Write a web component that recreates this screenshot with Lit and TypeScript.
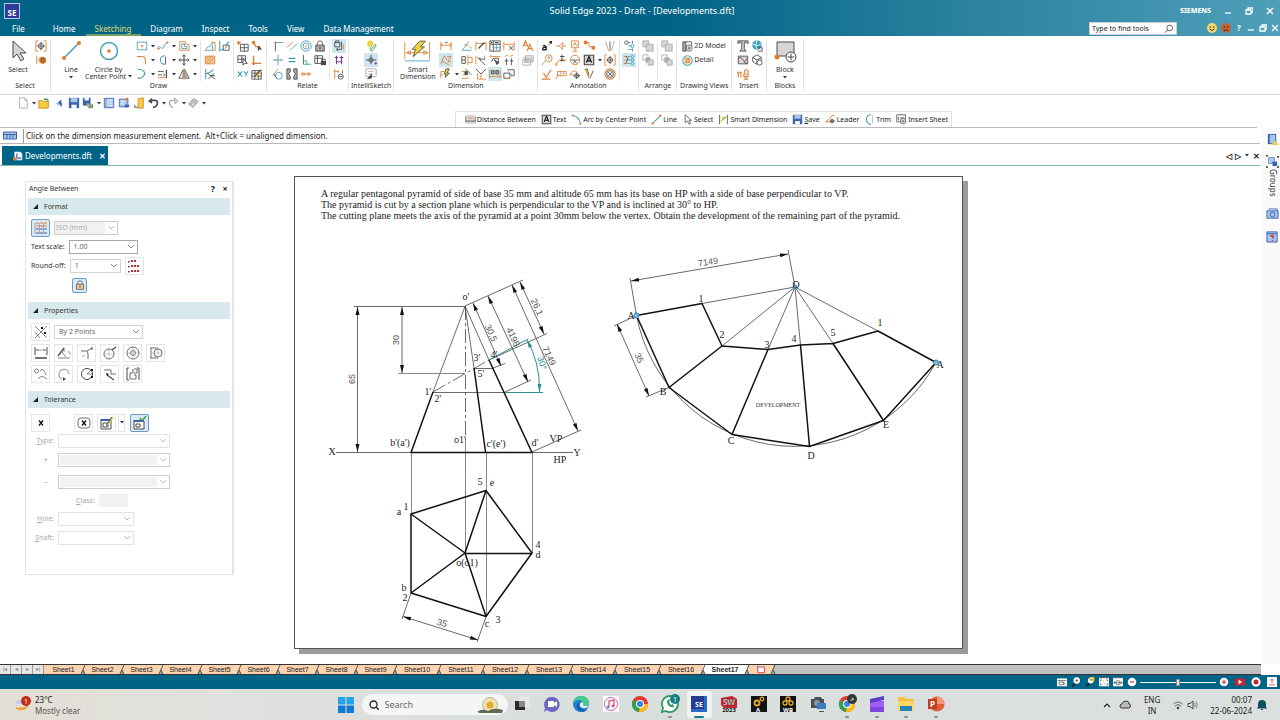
import { LitElement, html, svg, css, nothing } from "lit";
import { customElement, property, state } from "lit/decorators.js";
import { classMap } from "lit/directives/class-map.js";

/* ---------- icon drawing ---------- */

const COLORS: Record<string, string> = {
  o: "#dd7f33", t: "#3f9db6", k: "#4a4a4a", g: "#a9a9a9", l: "#d6d6d6", y: "#f4cf3f",
  b: "#3f62b0", c: "#a8c6ea", p: "#74318f", w: "#ffffff", r: "#c8262c", n: "#3c9a4c", s: "#f4c999", x: "#111111",
};

const c = (x: number, y: number, r: number) => `M${x - r} ${y}a${r} ${r} 0 1 0 ${2 * r} 0a${r} ${r} 0 1 0 ${-2 * r} 0`;

/* Each layer: colour letter, "*" for a fill, optional stroke width, then path data. */
const ICONS: Record<string, string[]> = {
  "Select tool": ["l* M7 2v17l4-4 4 7 3-2-4-6h6z", "k M7 2v17l4-4 4 7 3-2-4-6h6z"],
  "Selection filter": ["o M4 1H1v12h3M10 1h3v12h-3", `k ${c(7, 7, 3)}`, "k M7 2v10M2 7h10"],
  "Select options": ["o M2 2v10M2 7h3", "o* M5 4l4-1 4 2v5l-4 2-4-2z", `k ${c(9, 7, 2)}`],
  "Line tool": ["t1.4 M5 19L20 4", `o* ${c(5, 19, 2)}`, `o* ${c(20, 4, 2)}`],
  "Circle tool": [`t1.4 ${c(12, 12, 8.5)}`, `o* ${c(12, 12, 1.8)}`],
  "Rectangle by center": ["t M1.5 2.5h11v9h-11z", `o* ${c(7, 7, 1.3)}`],
  "Curve": ["t M1 11C2 2 6 14 8 8S11 4 13 3", `o* ${c(2, 10, 1.3)}`, `o* ${c(12, 3, 1.3)}`],
  "Offset": ["o M2 2h7v3h4v7H2z", "t M4.500 4.500h3v3h3v2.500h-6z"],
  "Fillet": ["o1.200 M1 3h5q5 0 5 5v4", "l M11 1v3M8 3h3"],
  "Trim": ["t1.200 M9 12A5 5 0 1 1 9 2", "k M10 3v9", "o M7 12h3"],
  "Move": ["k1.3 M7 1v12M1 7h12", "k M5 3l2-2 2 2M5 11l2 2 2-2M3 5L1 7l2 2M11 5l2 2-2 2"],
  "Arc": ["t1.3 M2 2c6-1 10 3 7 7s-5 3-6 3", `o* ${c(3, 12, 1.2)}`],
  "Extend": ["k M1 4h7M1 8h5", "k M7 6l2 2-2 2", "k1.5 M11 2v10", "o M1 11h9"],
  "Mirror": ["k M6 2v10H1zM8 2v10h5z", "g* M8 2v10h5z", "o M7 0v14"],
  "Freeform": ["t M1 12h9V6M3 9q5-1 7-6", "o M1 12l3-3M10 3h3v9h-3", `o* ${c(10, 3, 1.2)}`],
  "Convert curve": ["t1.200 M2 1v12M2 12C8 12 9 4 13 2", "w* M6 6h7v6H6z", "k M6 6h7v6H6z", "k M8 10l3-3"],
  "Fill": ["s* M1.500 2.500h11v9h-11z", "o M1.500 2.500h11v9h-11zM2 6l4-4M2 10l8-8M5 11l7-7"],
  "Clean sketch": ["t1.200 M2 1v12M2 7q5-1 9-5", "k M4 6l9 7M12 6l-7 7M7 9h6"],
  "Grid origin": ["k M4 5h9v8H4zM8.500 5v8M4 9h9", "o* M0 1l5 2-4 3z"],
  "Key-in point": ["o1.600 M3 3l3 5h5", `o* ${c(3, 3, 2)}`, "k* M8 6v7l2-2 3 0z"],
  "Grid snap": ["k M1 2h9v8H1zM5.500 2v8M1 6h9", "w* M7 5v8l2-2h3z", "k M7 5v8l2-2h3z"],
  "Reposition origin": ["o1.600 M3 2v9h9", `o* ${c(3, 11, 1.800)}`],
  "XY": ["t1.300 M1 4l5 6M6 4l-5 6M8 4l2.500 3L13 4M10.500 7v3"],
  "Grid options": ["k M1 3h11v10H1zM1 6h11M1 9.500h11M4.500 3v10M8.500 3v10", "k1.500 M5 9l7-7", "y1.200 M6 10l7-7"],
  "Connect": ["k M4 13V3", "t M4 3h9", `o* ${c(4, 3, 1.200)}`],
  "Parallel": ["o M1 9L8 2", "t M5 12l8-8"],
  "Concentric": [`t ${c(7, 7, 6)}`, `t ${c(7, 7, 3.500)}`, `o* ${c(7, 7, 1)}`],
  "Lock": ["g* M2 6h10v7H2z", "k M2 6h10v7H2zM4 6V4q0-3 3-3t3 3v2", "k M7 8v3"],
  "Horizontal": ["t M7 1v12M1 7h12", "o M3 7h2M9 7h2"],
  "Equal": ["t1.400 M3 5h8M3 9h8"],
  "Perpendicular": ["k M4 1v11", "t M4 12h9M4 8h4v4"],
  "Rigid set": ["k M1 2h9v9H1zM1 5h9M4 2v9", "k* M8 8h6v5H8z", "k M9 8V6h4v2"],
  "Tangent": [`t ${c(8, 9, 4)}`, "o M1 9l6-8", "k M2 7l3 4"],
  "Symmetric": ["g* M1 1h4v3L3 7l2 3v3H1zM13 1H9v3l2 3-2 3v3h4z", "k M1 1h4v3L3 7l2 3v3H1zM13 1H9v3l2 3-2 3v3h4z"],
  "Collinear": ["o M1 7h12", `o ${c(4, 7, 1.500)}`, `o ${c(10, 7, 1.500)}`],
  "Maintain relations": ["k M2 3h6v5H2zM3 3V1h4v2M10 2v9H4M6 9l-2 2 2 2", "o M12 5v6"],
  "Relation handles": ["p1.200 M4 2v10M10 2v10M2 4h4M8 4h4M4 9h6"],
  "Relation assistant": ["o M2 1v12M1 4h6M6 3v3", `k ${c(9, 10, 3)}`, "k M7 10h4M11 3v3"],
  "Intellisketch ideas": [`y* ${c(6, 4, 3.500)}`, "g M5 8h3M5 9.500h3", "n M6 12l6-7 1 2-5 6z"],
  "Alignment indicator": ["k M7 1v11M1 7h12M4.500 7a2.500 2.500 0 1 0 5 0a2.500 2.500 0 1 0-5 0", "p M11 11h3M12.500 9.500v3"],
  "Intellisketch options": ["g M1 1h12v9H1z", "g M4 4h6M4 7h6", "k* M2 13l6-7v6z"],
  "Smart tool": ["o M1 3v21M31 3v21M3 16h26M3 16l5-2.500v5zM29 16l-5-2.500v5z", "y* M19 2h7l-6 7h5L11 21l3-9h-4z", "k M19 2h7l-6 7h5L11 21l3-9h-4z", "t M1 26h31"],
  "Distance": ["o M1 2v10M13 2v10M1 6h12M3 4L1 6l2 2M11 4l2 2-2 2", "k M6 3h3"],
  "Angle between": ["o M1 12L5 2l3 5M2 8l9 5M8 3h5L9 9h4"],
  "Feature dimension": ["y* M7 1h4L8 6h3l-5 5 1-4H5z", "k M7 1h4L8 6h3l-5 5 1-4H5z", "o M1 12V4h4M1 8h3"],
  "Chamfer": ["t M2 11L9 2M1 12h11", "o M4 5l5 2M10 8l3 2"],
  "Attach": ["o M1 2v10M13 2v10M1 4h12", "k1.500 M4 10l7-7"],
  "Dimension styles": ["k M1 1h12v12H1zM1 5h12M5 1v12", "t M6 9h6M9 6v6", "k1.300 M2 3h2M7 3h4"],
  "Dimension axis": ["o M1 2v10M13 2v10M1 5h12", "k M7 7l5 5M12 7l-5 5"],
  "Symmetric diameter": ["k M1 3h4v8H1zM1 7h4", "o M8 1v12M8 4h5v6H8"],
  "Ordinate": ["o M1 2v10M11 2v4", "k M5 6h7M5 6l7 7M3 4l4 2"],
  "Edit text": ["k M3 9l2-4 3 4M6 5h5v6", "o M1 3h12M1 3l2-2", "k* M6 6l6 4-3 3z"],
  "Line up": ["o M2 3l4-2M8 3l4-2", "k M4 5v8M10 5v8M2 8h4M8 8h4"],
  "Remove dimension": ["o M1 4h8M2 8h6M1 12h8", "k M5 1l7 7", "k* M4 4h4v4H4z"],
  "Coordinate": ["k M1 1l6 6 6-6", "o M3 6v7h10M7 7v6"],
  "Auto-dimension": ["o M1 2v10M13 2v10M1 10h12", "g* M3 3h3v4H3zM8 3h3v4H8z", "k M3 3h3v4H3zM8 3h3v4H8z"],
  "Copy dimension": ["k M1 6h7v6H1zM5 2h8v7H9", "t M6 4l5 5", "o M2 12h5"],
  "Style": ["o1.300 M1 8l3-7 3 7M2 6h4M6 13l3-8 4 8M7 10h5"],
  "Prefix": ["l* M2 3h11v7H2z", "g M1 6h9v7H1zM4 6V2h9v7h-3", "g M3 8h5M3 10h5"],
  "Callout": ["x1.500 M2 7q3-1 4 1v4M6 9q-4-1-4 1.500T6 11", "o M8 7l5-5", "x* M13 1l-4 1 3 3z"],
  "Flag": ["o M1 7h4l4-4v8L5 7M9 7h4"],
  "Datum target": ["o M3 1h8v8H3zM7 9v4M4 13h6", "o M5 7l2-4 2 4"],
  "Leader": ["o M3 3h4v5h5", "o* M1 1h4v4H1zM10 7h4v4h-4z"],
  "Weld symbol": ["g M2 1l3 11M12 1L9 12", "k M7 2v9", "o M5 12h4"],
  "Balloon": [`o ${c(9, 5, 4)}`, "o M5 8l-4 5", "k M8 4q1-2 2 0l-1 2"],
  "Surface mark": ["o M1 13l4-6h8M3 13H1v-3", "k1.200 M8 1v7M6 3h5M6 8h5"],
  "Datum": [`o ${c(7, 7, 5.500)}`, "k M2 7h10M5 11l2-3 2 3"],
  "Text box": ["l* M1.500 1.500h11v11h-11z", "k1.300 M1.500 1.500h11v11h-11z", "x1.400 M4 10l3-7 3 7M5 8h4"],
  "Center mark": ["o M3 1H1v12h2M11 1h2v12h-2", `k ${c(7, 7, 3)}`, "k M7 2v10M3 7h8"],
  "Surface texture": ["o1.300 M3 6l3 5 6-9M1 13h10"],
  "Feature frame": ["o M1 13l3-6M3 4h10v5H3zM7 4v5", "k M9 6h2"],
  "Edge condition": ["o M1 8q3-6 8-4M1 8h4", `k ${c(9, 9, 2.500)}`, "k M9 5v8M5 9h8"],
  "Leader mark": ["o1.200 M1 10l5-4 3-4h3M1 10h9", `k ${c(9, 9, 2)}`, "k M9 6v6M6 9h7"],
  "Hatch": ["y* M2 2l3-1 2 11z", "k M2 2l3-1 2 8M8 12l4-9", "o M7 12L4 4"],
  "Bolt circle": [`o1.300 ${c(7, 7, 6)}`, `k ${c(7, 7, 4)}`, "k M4 4l6 6M10 4l-6 6"],
  "Track changes": ["t M6 3h3M6 7h4M6 11h4", `k ${c(4, 3, 2)}`, `t ${c(11, 7, 1.800)}`, "k M11 1v3M11 10v3"],
  "Show changes": ["o M1 3h5M1 7h5M1 11h5", `t ${c(11, 3, 1.500)}`, `t ${c(11, 7, 1.500)}`, `t ${c(11, 11, 1.500)}`, "t M6 3h3M6 7h3M6 11h3", "k M3 2l3 4-3 5"],
  "Bring to front": ["l* M1 1h7v7H1z", "g M1 1h7v7H1z", "l* M5 5h8v8H5z", "g M5 5h8v8H5z"],
  "Send to back": ["g M1 1h6v6H1z", "g* M4 4h6v6H4z", "l* M7 7h6v6H7z", "g M7 7h6v6H7z"],
  "2D model view": ["g* M1 1h4v12H1z", "k M1 1h11v5M1 1v12h4M5 1v12", `k ${c(9, 9, 4)}`, "k M9 6.500v5M6.500 9h5"],
  "Detail view": [`t1.300 ${c(7, 7, 6)}`, "s* M4 4h6v6H4z", "o M4 4h6v6H4zM6 4v6M8 4v6"],
  "Text": ["l* M1 1h12v3H8.500v8h2v1h-7v-1h2V4H1z", "k M1 1h12v3h-1L11 2.500H8.500v9l2 .5v1h-7v-1l2-.5v-9H3L2 4H1z"],
  "Hyperlink": [`t* ${c(7, 6, 5.500)}`, "w M2 5q5 3 10 0M7 1q-3 5 0 10", "k M8 9h5v4H8"],
  "Image": ["l* M1.500 2.500h11v9h-11z", "k M1.500 2.500h11v9h-11zM2 4q4 0 6 4t4 3", "r M9 9l3-4"],
  "Object": ["k M2 4l5-3 5 3v5l-5 3-5-3zM2 4l5 3 5-3M7 7v5", "w* M7 7h6v6H7z", `k ${c(10, 10, 3)}`],
  "Symbol": ["o1.300 M0 5h6M1.500 5v6M4.500 5v6M9 6V4q0-2 2-2t2 2v2M8 7h5v3H8zM10.500 10v3M8 13h5"],
  "Block tool": ["l* M4 3h17v14H4z", "k M4 3h17v14H4z", `o* ${c(4, 18, 2.500)}`, `w* ${c(18, 18, 5)}`, `k ${c(18, 18, 5)}`, "k M18 14.500v7M14.500 18h7"],
  "New": ["w* M3 1h6l3 3v9H3z", "g M3 1h6l3 3v9H3zM9 1v3h3"],
  "Open": ["y* M1 4h4l1 1h6v8H1z", "o M1 4h4l1 1h6v8H1z", "n1.500 M7 3q4-2 5 2"],
  "Previous window": ["c* M10 3v9L3 8z", "b* M9 3l2 8-5-4z"],
  "Save": ["b* M1 1h12v12H1z", "c* M3 1h8v5H3z", "w* M4 9h6v4H4z"],
  "Save as": ["b* M1 1h9v9H1z", "w* M3 1h5v3H3z", "g* M5 7l8 2v4H7z", "n M7 7l5 5M12 8v4H8"],
  "Properties": ["c* M1.500 1.500h11v11h-11z", "b M1.500 1.500h11v11h-11z", "w M5 4h6M5 7h6M5 10h6", "b M3 4h1M3 7h1M3 10h1"],
  "Sheet setup": ["c* M1.500 2.500h10v9h-10z", "b M1.500 2.500h10v9h-10z", "w M3 5h5M3 8h4", "o* M9 1h3v3H9z", "b* M8 9h5v3H8z"],
  "Close": ["y* M6 2l6-1v12H6z", "o M6 2l6-1v12H6z", "k M2 12h4M2 9v3"],
  "Undo": ["k2 M4 4h5q4 0 3 4t-5 4", "k* M1 5l5-4v7z"],
  "Redo": ["g1.500 M10 4H6Q2 4 3 8t4 4", "l* M13 5L9 1v7z", "g M13 5L9 1v7z"],
  "Update": ["l* M2 8l6-6 5 3-6 7z", "g1.200 M2 8l6-6 5 3-6 7zM5 4l6 4M3 10l7-6"],
  "Distance between": ["l* M2 1h10v12H2z", "k M1 3v8M13 3v8M1 9h12", "o M4 5h6"],
  "Arc tool": ["t1.300 M2 2q9 1 10 11", `o* ${c(2, 2, 1.300)}`, `o* ${c(12, 12, 1.300)}`],
  "Small line": ["t1.300 M2 12L12 2", `o* ${c(2, 12, 1.500)}`, `o* ${c(12, 2, 1.500)}`],
  "Small select": ["w* M4 1v10l3-2 2 4 2-1-2-4h3z", "k M4 1v10l3-2 2 4 2-1-2-4h3z"],
  "Small smart": ["k M2 1v12M12 1v12", "y1.500 M3 10L11 3M4 5l5-1", "n M5 8l5-4"],
  "Trim tool": ["t1.300 M9 13A6 6 0 1 1 9 1", "g M11 2v10"],
  "Insert sheet": ["k M1 1h11v9H1zM3 4v4M5 5h5", `w* ${c(9, 9, 3.500)}`, `k ${c(9, 9, 3.500)}`, "k M9 7v4M7 9h4"],
  "Prompt": ["c* M0 3h14v7H0z", "b M0.500 3h13v7H.5zM1 5.500h12M4 5.500v4M7 5.500v4M10 5.500v4"],
  "Draft file": ["w* M2 1h8l3 3v9H2z", "c* M4 3h3v5h5v4H4z", "b M5 4v6h6", "o* M0 9h5v4H0z"],
  "Style table": ["o M2 2h3M6 2h3M10 2h3M2 5h3M6 5h3M10 5h3", "b M2 8h3M6 8h3M10 8h3M2 12h3M6 12h3M10 12h3", "g M1 2v11M5.500 2v11M9.500 2v11"],
  "Decimals": ["r M4 1l2 2M6 1L4 3M7 1l2 2M9 1L7 3M4 6l2 2M6 6L4 8M7 6l2 2M9 6L7 8M10 6l2 2M12 6l-2 2M4 11l2 2M6 11l-2 2M7 11l2 2M9 11l-2 2M10 11l2 2M12 11l-2 2", "k* M1 2h1.500v1.500H1zM1 7h1.500v1.500H1zM1 12h1.500v1.500H1z"],
  "Padlock": ["s* M2 6h10v7H2z", "k M2 6h10v7H2zM4 6V4q0-3 3-3t3 3v2", "k1.500 M7 8v3"],
  "Intersection": ["k.7 M1 1l12 12M13 1L1 13M1 7l5 6", "x* M7 2h2v2H7zM10 7h2v2h-2z"],
  "Length": ["k M1 1v8M13 1v8M2 4h3M9 4h3", "g M5 4h4", "k1.500 M1 12h12"],
  "Angle": ["k1.300 M1 10L7 2", "k.7 M7 2v4M4 5l5 6M1 12h12", "g M10 6h3v3"],
  "Radius point": ["k.8 M1 5h5q2 0 2 3v5M7 5l5-3", "g M2 10h3", "k M12 1v3"],
  "Diameter": [`k.8 ${c(6, 8, 5)}`, "g.6 M6 2v12M0 8h12", "k1.500 M9 4l4-3"],
  "Concentric rings": [`k.8 ${c(7, 7, 6)}`, `k.8 ${c(7, 7, 2.500)}`, "g.6 M7 0v14M0 7h14"],
  "Linear diameter": ["k.8 M2 2v10M1 2h8M1 12h8", `k.8 ${c(9, 7, 4)}`, "g.6 M3 7h11M9 1v12"],
  "Tangent arcs": [`k.7 ${c(2.500, 4, 2)}`, "k.7 M6 4l2-2q3 2 4 6M4 12q3-5 9 0"],
  "Arc length": ["g1.200 M5 12A5 5 0 1 1 12 7", "k* M6 10v4l3-2z"],
  "Arc angle": [`k ${c(7, 7, 5.500)}`, "k.7 M7 7h5M7 7l4-4", "x* M11 2h2v2h-2zM11 9h2v2h-2z"],
  "Jogged": ["k.8 M1 3h7v4h5", "k1.200 M4 8l7 5", "x* M3 6l3 1-2 2z"],
  "Bracketed": ["k M3 1H1v12h2M11 1h2v12", "k.8 M7 2v4H4v6h6V8H8M8 2h3v4H8"],
  "Clear tolerance": ["x1.300 M5 4.500l4 5M9 4.500l-4 5"],
  "Round tolerance": ["k.8 M4 2h6q3 0 3 3v4q0 3-3 3H4q-3 0-3-3V5q0-3 3-3z", "x1.300 M5 4.500l4 5M9 4.500l-4 5"],
  "Edit style": ["w* M1 4h10v9H1z", "b2 M1 4h10", "k M1 3v10h10V4M3 7h5v4H3z", "y1.500 M7 9l6-8", "k M6 10l6-9"],
  "Apply style": ["w* M1 4h10v9H1z", "b2 M1 5h10", "k M1 4v9h10V5M3 8h4v3H3z", "n1.500 M7 2l2 3 4-5"],
  "Library": ["b* M2 1h9v11H2z", "c* M4 2h6v9H4z", "y* M9 8l5 5H6z"],
  "Groups": ["b M3 3h6v6H3z", "c* M4 4h5v5H4z", "b* M7 7h5v5H7z", "k* M0 0h2v2H0zM12 1h2v2h-2zM0 12h2v2H0zM12 12h2v2h-2z"],
  "Camera": ["c* M1 3h12v8H1z", "b M1 3h12v8H1zM3 1h9v2", `b ${c(7, 7, 2.500)}`],
  "Help page": ["c* M1 2h11v11H1z", "b M1 2h11v11H1zM1 4h11", "r1.500 M5 7q2-3 3 0L7 9M7 11v1"],
  "Fit sheet": ["w* M0 2h14v11H0z", "k M1 5h12M3 7h6v4H3zM9 7l3 4"],
  "Zoom": ["x2 M2 13l4-4", `w* ${c(8, 5, 4.500)}`, "k M8 3v4M6 5h4"],
  "Zoom area": ["x2 M2 13l4-4", `w* ${c(8, 5, 4)}`, "y* M7 0h6v6H9z", "k M6 4h4"],
  "Fit": ["w* M0 1h14v12H0z", "k M0 1h14M2 6V4h2M10 4h2v2M2 9v2h2M10 11h2V9M6 5v1M8 9v1"],
  "Fit width": ["w* M0 1h14v12H0z", "k M0 1h14M1 8h12M3 6L1 8l2 2M11 6l2 2-2 2", `k ${c(7, 8, 3)}`],
  "YouTube": ["r* M0 2h14v10H0z", "w* M5 4l5 3-5 3z"],
  "Record": [`w* ${c(7, 7, 6.500)}`, `r* ${c(7, 7, 3.500)}`],
  "Upload": ["w* M0 0h14v14H0z", "r M3 11h8M7 9V3M5 5l2-2 2 2"],
  "Zoom out": [`w* ${c(7, 7, 6)}`, "r1.500 M4 7h6"],
  "Zoom in": [`w* ${c(7, 7, 6)}`, "r1.500 M4 7h6M7 4v6"],
  "Search glass": [`k1.200 ${c(8, 5.500, 4)}`, "k1.400 M5 8.500L1.500 12"],
  "New sheet": ["w* M3 2h10v10H3z", "r1.300 M3 5v7h10V3H5", "b M1 3h5M3 1v5"],
};

const ic = (name: string, w = 14, h = w, vw = w, vh = h) => html`<svg class="ic" width=${w} height=${h} viewBox="0 0 ${vw} ${vh}" aria-hidden="true">
  ${(ICONS[name] ?? []).map((layer) => {
    const m = /^(\w)(\*?)([\d.]*) (.*)$/.exec(layer)!;
    const col = COLORS[m[1]];
    return svg`<path d=${m[4]} fill=${m[2] ? col : "none"} stroke=${m[2] ? "none" : col} stroke-width=${m[3] || "1"}></path>`;
  })}
</svg>`;

const chevron = html`<svg class="chev" width="8" height="6" viewBox="0 0 8 6" aria-hidden="true"><path d="M1 1l3 3 3-3" fill="none" stroke="currentColor" stroke-width=".8"></path></svg>`;
const caret = html`<svg class="caret" width="4" height="3" viewBox="0 0 4 3" aria-hidden="true"><path d="M0 0h4L2 2.500z" fill="#333"></path></svg>`;

const base = css`
  :host { display: block; font-family: "Noto Sans", "Open Sans", sans-serif; font-size: 7px; line-height: 10px; color: #333; }
  * { box-sizing: border-box; }
  button, input, select { font: inherit; color: inherit; margin: 0; padding: 0; border: 0; background: none; border-radius: 0; }
  button { display: flex; align-items: center; justify-content: center; white-space: nowrap; }
  a { color: inherit; text-decoration: none; }
  svg { display: block; flex: none; }
  .spacer { flex: 1; }
`;

/* ---------- title and menu ---------- */

@customElement("se-header")
class SeHeader extends LitElement {
  static styles = [base, css`
    :host { background: linear-gradient(90deg, #006487 0 52%, #2c829f 76%, #4f9fba); color: #fff; font-size: 8px; }
    .title { display: grid; grid-template-columns: 1fr auto 1fr; align-items: center; height: 22px; padding-left: 4px; }
    .logo { width: 16px; height: 16px; border: 1px solid #b9c6ea; background: #2b3e9c; font-weight: 700; line-height: 17px; text-align: center; }
    h1 { margin: 0; font-size: 9px; font-weight: 400; }
    .win { display: flex; align-items: center; justify-content: flex-end; gap: 13px; padding-right: 6px; }
    .win button { width: 8px; height: 14px; }
    .brand { font-weight: 800; font-size: 7px; }
    .menu { display: flex; height: 14px; align-items: stretch; padding-left: 3px; }
    .menu a { display: flex; align-items: center; padding: 0 10px 0 9px; line-height: 12px; }
    .menu a:first-child { margin-right: 9px; }
    .menu a.on { color: #e2d56c; background: linear-gradient(#0000 12px, #7a9f66 12px); }
    .find { display: flex; align-items: center; width: 88px; background: #fff; margin-bottom: 1px; padding: 0 2px; border: 1px solid #ccd; }
    .find input { flex: 1; min-width: 0; font-size: 7px; outline: 0; color: #222; }
    .find input::placeholder { color: #222; opacity: 1; }
    .side { display: flex; align-items: center; gap: 4px; padding: 0 1px 2px 30px; }
    .side button { width: 10px; height: 12px; font-weight: 700; }
    .side button:nth-child(n + 3) { width: 8px; }
  `];
  private face(fill: string, mouth: string) {
    return html`<svg width="10" height="10" viewBox="0 0 10 10" aria-hidden="true"><circle cx="5" cy="5" r="5" fill=${fill}></circle><circle cx="3.300" cy="4" r=".8" fill="#333"></circle><circle cx="6.700" cy="4" r=".8" fill="#333"></circle><path d=${mouth} fill="none" stroke="#333"></path></svg>`;
  }
  private win(kind: string) {
    const d = { min: "M1 6h6", restore: "M1 3h5v4H1zM3 3V1h5v4H6", close: "M1 1l6 6M7 1L1 7" }[kind];
    return html`<button aria-label=${kind}><svg width="8" height="8" viewBox="0 0 8 8" aria-hidden="true"><path d=${d} fill="none" stroke="#fff" stroke-width="1.300"></path></svg></button>`;
  }
  render() {
    const menu = ["File", "Home", "Sketching", "Diagram", "Inspect", "Tools", "View", "Data Management"];
    return html`
      <div class="title">
        <div class="logo">SE</div>
        <h1>Solid Edge 2023 - Draft - [Developments.dft]</h1>
        <div class="win"><span class="brand">SIEMENS</span>${this.win("min")}${this.win("restore")}${this.win("close")}</div>
      </div>
      <nav class="menu">
        ${menu.map((m) => html`<a href="#" class=${classMap({ on: m === "Sketching" })}>${m}</a>`)}
        <span class="spacer"></span>
        <label class="find"><input type="search" placeholder="Type to find tools" aria-label="Type to find tools" />${ic("Search glass", 10, 10, 14, 14)}</label>
        <div class="side">
          <button aria-label="Like">${this.face("#f5dc6a", "M2.500 6q2.500 3 5 0")}</button>
          <button aria-label="Dislike">${this.face("#c9622f", "M2.500 8q2.500-3 5 0")}</button>
          <button>?</button>${this.win("min")}${this.win("restore")}${this.win("close")}
        </div>
      </nav>`;
  }
}

/* ---------- ribbon ---------- */

@customElement("se-ribbon")
class SeRibbon extends LitElement {
  static styles = [base, css`
    :host { background: #fff; border-bottom: 1px solid #d9d9d9; }
    .bar { display: flex; padding: 3px 0; }
    .group { display: flex; flex-direction: column; border-right: 1px solid #e2e2e2; }
    .row { display: flex; height: 42px; flex: none; }
    .label { text-align: center; white-space: nowrap; height: 10px; padding: 0 2px; }
    .cluster { display: flex; padding: 0 2px; border-left: 1px solid #e6e6e6; flex: 1; justify-content: center; }
    .cluster:first-child { border-left: 0; }
    .cluster.pad { padding-left: 4px; }
    .col { display: grid; grid-template-rows: repeat(3, 14px); width: 14px; }
    .col.wide { width: 21px; }
    .big + .col.first { margin-left: 5px; }
    .cell { display: grid; grid-template-columns: 14px 7px; align-items: center; justify-items: center; height: 14px; }
    .cell button { width: 14px; height: 14px; }
    .cell button.on { background: #cfe6ee; }
    .cell .ic { width: 12px; height: 12px; }
    .big { flex-direction: column; justify-content: flex-start; line-height: 7px; gap: 3px; height: 42px; text-align: center; width: 43px; }
    .big.narrow { width: 32px; }
    .big .ic { flex: none; }
    .big .txt { display: flex; flex-direction: column; align-items: center; }
    .big .txt .caret { margin-top: 3px; }
    .big .in { display: flex; align-items: center; gap: 2px; }
    .big .in .caret { margin: 0; }
    .views { display: flex; flex-direction: column; align-items: flex-start; padding: 0 5px; }
    .views button { height: 14px; gap: 1px; }
    .views .ic { width: 11px; height: 11px; }
  `];
  private col(spec: string, wide = false, first = false) {
    return html`<div class="col ${wide ? "wide" : ""} ${first ? "first" : ""}">${spec.split("|").map((raw) => {
      const name = raw.replace(/[+!]/g, "");
      return html`<div class="cell">${name ? html`<button class=${raw.includes("!") ? "on" : ""} aria-label=${name} title=${name}>${ic(name, 14)}</button>` : html`<span></span>`}${raw.includes("+") ? caret : nothing}</div>`;
    })}</div>`;
  }
  private big(icon: string, lines: string[], opt: { narrow?: boolean; below?: boolean; inline?: boolean; w?: number } = {}) {
    return html`<button class="big ${opt.narrow ? "narrow" : ""}">
      ${opt.w ? ic(icon, opt.w, 24, 34, 28) : ic(icon, 24)}
      <span class="txt">${lines.map((l, i) => html`<span class="in">${l}${opt.inline && i === lines.length - 1 ? caret : nothing}</span>`)}${opt.below ? caret : nothing}</span>
    </button>`;
  }
  private group(label: string, clusters: unknown[]) {
    return html`<section class="group"><div class="row">${clusters}</div><div class="label">${label}</div></section>`;
  }
  render() {
    const cl = (...x: unknown[]) => html`<div class="cluster">${x}</div>`;
    const cp = (...x: unknown[]) => html`<div class="cluster pad">${x}</div>`;
    return html`<div class="bar">
      ${this.group("Select", [cl(this.big("Select tool", ["Select"], { narrow: true }), this.col("Selection filter|Select options"))])}
      ${this.group("Draw", [
        cp(this.big("Line tool", ["Line"], { narrow: true, below: true }), this.big("Circle tool", ["Circle by", "Center Point"], { inline: true }),
          this.col("Rectangle by center+|Fillet+|Arc+", true, true), this.col("Curve+|Trim+|Extend+", true), this.col("Offset+|Move+|Mirror+", true)),
        cl(this.col("Freeform|Fill|Clean sketch"), this.col("Convert curve||")),
        cl(this.col("Grid origin|Grid snap|XY"), this.col("Key-in point|Reposition origin|Grid options")),
      ])}
      ${this.group("Relate", [
        cp(this.col("Connect|Horizontal|Tangent"), this.col("Parallel|Equal|Symmetric"), this.col("Concentric|Perpendicular|Collinear"), this.col("Lock|Rigid set|")),
        cl(this.col("Maintain relations!|Relation handles|Relation assistant")),
      ])}
      ${this.group("IntelliSketch", [cl(this.col("Intellisketch ideas|Alignment indicator!|Intellisketch options"))])}
      ${this.group("Dimension", [
        cl(this.big("Smart tool", ["Smart", "Dimension"], { w: 28 }), this.col("Distance|Angle between!|Feature dimension+", true),
          this.col("Chamfer|Symmetric diameter|Remove dimension"), this.col("Attach|Ordinate|Coordinate"), this.col("Dimension styles|Edit text|Auto-dimension!"), this.col("Dimension axis|Line up|Copy dimension")),
        cl(this.col("Style|Prefix|")),
      ])}
      ${this.group("Annotation", [
        cl(this.col("Callout|Balloon|Surface texture"), this.col("Flag|Surface mark|Feature frame"), this.col("Datum target|Datum|Edge condition"), this.col("Leader|Text box+|Hatch", true), this.col("Weld symbol|Center mark|Bolt circle")),
        cl(this.col("Track changes|Show changes!|")),
      ])}
      ${this.group("Arrange", [cl(this.col("Bring to front|Send to back|")), cl(this.col("Bring to front|Send to back|"))])}
      ${this.group("Drawing Views", [html`<div class="views"><button>${ic("2D model view")}2D Model</button><button>${ic("Detail view")}Detail</button></div>`])}
      ${this.group("Insert", [cp(this.col("Text|Image|Symbol"), this.col("Hyperlink|Object|"))])}
      ${this.group("Blocks", [html`<div class="cluster">${this.big("Block tool", ["Block"], { narrow: true, below: true })}</div>`])}
    </div>`;
  }
}

/* ---------- quick access, custom toolbar, prompt, document tab ---------- */

@customElement("se-bars")
class SeBars extends LitElement {
  static styles = [base, css`
    .quick { display: flex; align-items: center; height: 16px; padding-left: 17px; gap: 1px; }
    .quick button { height: 14px; min-width: 14px; gap: 3px; }
    .quick .ic { width: 12px; height: 12px; }
    .custom { display: flex; justify-content: flex-end; height: 17px; margin-right: 23px; border-bottom: 1px solid #b9b9b9; }
    .tools { display: flex; align-items: center; gap: 5px; border: 1px solid #e0e0e0; border-bottom: 0; padding: 0 3px 0 9px; margin-right: 305px; }
    .tools button { gap: 1px; color: #222; }
    .tools .ic { width: 11px; height: 11px; }
    .prompt { display: flex; align-items: center; height: 16px; margin-right: 20px; padding-left: 3px; gap: 6px; border-bottom: 1px solid #b9b9b9; font-size: 8px; color: #222; white-space: pre; }
    .prompt p { margin: 0; border-left: 1px solid #999; padding-left: 2px; line-height: 14px; }
    .tabs { display: flex; align-items: center; height: 22px; margin-right: 20px; padding: 2px 0 0 2px; border-bottom: 1px solid #86b5a9; }
    .tab { display: flex; align-items: center; align-self: stretch; width: 106px; background: #006487; color: #fff; padding: 0 2px 0 11px; gap: 2px; font-size: 8px; }
    .tab button, .ctl button { width: 8px; height: 12px; font-size: 8px; font-weight: 700; }
    .ctl { display: flex; gap: 1px; color: #222; }
  `];
  render() {
    const quick = ["New+", "Open", "Previous window", "Save", "Save as+", "Properties", "Sheet setup", "Close", "Undo+", "Redo+", "Update+"];
    const tools: [string, unknown][] = [
      ["Distance between", "Distance Between"], ["Text box", "Text"], ["Arc tool", "Arc by Center Point"], ["Small line", "Line"], ["Small select", "Select"],
      ["Small smart", "Smart Dimension"], ["Save", html`<span><u>S</u>ave</span>`], ["Leader mark", "Leader"], ["Trim tool", "Trim"], ["Insert sheet", "Insert Sheet"],
    ];
    return html`
      <div class="quick">${quick.map((q) => html`<button aria-label=${q.replace("+", "")}>${ic(q.replace("+", ""))}${q.includes("+") ? caret : nothing}</button>`)}</div>
      <div class="custom"><div class="tools">${tools.map(([i, l]) => html`<button>${ic(i)}${l}</button>`)}</div></div>
      <div class="prompt">${ic("Prompt")}<p>Click on the dimension measurement element.  Alt+Click = unaligned dimension.</p></div>
      <div class="tabs">
        <div class="tab">${ic("Draft file", 10, 10, 14, 14)}<span>Developments.dft</span><span class="spacer"></span><button aria-label="Close document">✕</button></div>
        <span class="spacer"></span>
        <div class="ctl"><button aria-label="Previous">◁</button><button aria-label="Next">▷</button><button aria-label="Documents">${caret}</button><button aria-label="Close">✕</button></div>
      </div>`;
  }
}

/* ---------- command panel ---------- */

@customElement("se-panel")
class SePanel extends LitElement {
  static styles = [base, css`
    :host { border: 1px solid #e3e3e3; border-width: 1px 2px 1px 1px; padding: 0 2px 0 2px; height: 394px; background: #fff; }
    .head { display: flex; align-items: center; height: 13px; gap: 4px; padding: 0 1px; margin-bottom: 3px; }
    .head button { width: 8px; font-size: 9px; font-weight: 700; color: #222; }
    h2 { display: flex; align-items: center; gap: 6px; margin: 0; height: 17px; padding-left: 5px; background: #d8e9ed; font-size: 7px; font-weight: 400; }
    .body { display: flex; flex-direction: column; gap: 4px; padding: 5px 3px 9px; }
    .row { display: flex; align-items: center; gap: 4px; height: 16px; }
    .tools { height: 17px; }
    .btn { width: 19px; height: 18px; border: 1px solid #e6e6e6; flex: none; }
    .btn.on { border-color: #6d9cc0; border-radius: 2px; background: #d9eaf6; }
    .btn.lock { width: 15px; height: 15px; margin-left: 41px; }
    .btn.thin { width: 7px; margin: 0 1px 0 -2px; }
    .btn .ic { width: 14px; height: 14px; }
    .btn.lock .ic { width: 10px; height: 10px; }
    .lead { margin-right: 20px; }
    .sel { display: grid; height: 14px; border: 1px solid #d2d2d2; align-items: center; background: #fff; color: #666; }
    .sel select, .sel .chev { grid-area: 1 / 1; }
    .sel select { appearance: none; width: 100%; height: 12px; padding-left: 4px; opacity: 1; }
    .sel .chev { justify-self: end; margin-right: 2px; pointer-events: none; }
    .w51 { width: 51px; } .w64 { width: 64px; } .w69 { width: 69px; } .w76 { width: 76px; } .w89 { width: 89px; } .w112 { width: 112px; }
    .dark { border-color: #a5a5a5; }
    .off { color: #a9a9a9; }
    .off.sel { border-color: #e3e3e3; }
    .off.line { border-color: #cccccc; }
    .off.line select { background: #f2f2f2 content-box; padding: 1px 12px 1px 1px; }
    .off.text select { background: linear-gradient(90deg, #f2f2f2 50px, #fff 50px); }
    .tol { display: grid; grid-template-columns: 23px auto; column-gap: 4px; row-gap: 5px; align-items: center; justify-content: start; color: #a9a9a9; }
    .tol label { text-align: right; white-space: nowrap; }
    .tol .sign { padding-right: 6px; font-size: 8px; }
    .tol .gap { margin-top: 3px; }
    .cls { display: flex; align-items: center; gap: 4px; padding-left: 18px; }
    .cls input { width: 29px; height: 13px; background: #f2f2f2; }
    .body.fmt { gap: 3px; }
    .body.last { padding-top: 6px; gap: 3px; }
  `];
  private head(t: string) {
    return html`<h2><svg width="5" height="5" viewBox="0 0 5 5" aria-hidden="true"><path d="M5 0v5H0z" fill="#222"></path></svg>${t}</h2>`;
  }
  private sel(id: string, value: string, cls: string, label = "") {
    return html`<span class="sel ${cls}"><select id=${id} aria-label=${label || nothing} ?disabled=${cls.includes("off")}><option>${value}</option></select>${chevron}</span>`;
  }
  private btn(name: string, cls = "") {
    return html`<button class="btn ${cls}" aria-label=${name} title=${name}>${ic(name)}</button>`;
  }
  render() {
    const u = (a: string, b: string) => html`<u>${a}</u>${b}`;
    return html`
      <div class="head"><span>Angle Between</span><span class="spacer"></span><button aria-label="Help">?</button><button aria-label="Close">×</button></div>
      ${this.head("Format")}
      <div class="body fmt">
        <div class="row">${this.btn("Style table", "on")}${this.sel("std", "ISO (mm)", "w64 off line text", "Style")}</div>
        <div class="row"><label for="scale">Text scale:</label>${this.sel("scale", "1.00", "w69 dark")}</div>
        <div class="row"><label for="round">Round-off:</label>${this.sel("round", "1", "w51")}${this.btn("Decimals")}</div>
        <div class="row">${this.btn("Padlock", "on lock")}</div>
      </div>
      ${this.head("Properties")}
      <div class="body">
        <div class="row">${this.btn("Intersection")}${this.sel("pts", "By 2 Points", "w89", "Angle method")}</div>
        <div class="row tools">${["Length", "Angle", "Radius point", "Diameter", "Concentric rings", "Linear diameter"].map((n) => this.btn(n))}</div>
        <div class="row tools">${["Tangent arcs", "Arc length", "Arc angle", "Jogged", "Bracketed"].map((n) => this.btn(n))}</div>
      </div>
      ${this.head("Tolerance")}
      <div class="body last">
        <div class="row tools">${this.btn("Clear tolerance", "lead")}${this.btn("Round tolerance")}${this.btn("Edit style")}<button class="btn thin" aria-label="Styles">${caret}</button>${this.btn("Apply style", "on")}</div>
        <div class="tol">
          <label for="type">${u("T", "ype:")}</label>${this.sel("type", "", "w112 off")}
          <label class="sign" for="plus">+</label>${this.sel("plus", "", "w112 off line")}
          <label class="sign gap" for="minus">−</label>${this.sel("minus", "", "w112 off line gap")}
          <span></span><div class="cls"><label for="cls">${u("C", "lass:")}</label><input id="cls" disabled /></div>
          <label for="hole">${u("H", "ole:")}</label>${this.sel("hole", "", "w76 off")}
          <label for="shaft">${u("S", "haft:")}</label>${this.sel("shaft", "", "w76 off")}
        </div>
      </div>`;
  }
}

/* ---------- drawing sheet ---------- */

type Pt = [number, number];

@customElement("se-drawing")
class SeDrawing extends LitElement {
  static styles = [base, css`
    .paper { display: block; width: 100%; height: auto; background: #fff; border: 1px solid #555; box-shadow: 5px 5px 0 #9b9b9b; }
    .thin { stroke: #444; stroke-width: 0.8; fill: none; }
    .grey { stroke: #888; stroke-width: 1; fill: none; }
    .thick { stroke: #111; stroke-width: 1.5; fill: none; stroke-linejoin: round; }
    .axis { stroke-dasharray: 14 3 3 3; }
    .teal { stroke: #2d8f96; stroke-width: 1; fill: none; }
    .note { font: 10px "Liberation Serif", serif; fill: #222; }
    .name { font: 10px "Liberation Serif", serif; fill: #222; text-anchor: middle; }
    .small { font: 6px "Liberation Serif", serif; fill: #333; text-anchor: middle; }
    .dim { font: 9px "Liberation Sans", sans-serif; fill: #555; text-anchor: middle; }
    .dim.t { fill: #2d8f96; }
    .dot { fill: #7cc0e6; stroke: #2f7fb0; }
  `];
  private tip([x, y]: Pt, [fx, fy]: Pt, fill = "#111") {
    const a = (Math.atan2(y - fy, x - fx) * 180) / Math.PI;
    return svg`<path d="M0 0L-8 -2V2z" fill=${fill} transform="translate(${x} ${y}) rotate(${a})"></path>`;
  }
  private dim(a: Pt, b: Pt, label: string, at: Pt, rot: number) {
    return svg`<path class="thin" d="M${a}L${b}"></path>${this.tip(a, b)}${this.tip(b, a)}
      <text class="dim" transform="translate(${at[0]} ${at[1]}) rotate(${rot})" y="3">${label}</text>`;
  }
  render() {
    const notes = [
      "A regular pentagonal pyramid of side of base 35 mm and altitude 65 mm has its base on HP with a side of base perpendicular to VP.",
      "The pyramid is cut by a section plane which is perpendicular to the VP and is inclined at 30° to HP.",
      "The cutting plane meets the axis of the pyramid at a point 30mm below the vertex. Obtain the development of the remaining part of the pyramid.",
    ];
    const names: [string, number, number][] = [
      ["o'", 466, 300], ["3'", 477, 361], ["4'", 494, 358], ["5'", 481, 377], ["1'", 428, 395], ["2'", 438, 402],
      ["X", 332, 455], ["Y", 577, 456], ["b'(a')", 400, 446], ["o1'", 460, 443], ["c'(e')", 496, 447], ["d'", 535, 446], ["VP", 556, 442], ["HP", 560, 463],
      ["5", 480, 485], ["e", 492, 486], ["1", 406, 510], ["a", 399, 515], ["4", 538, 548], ["d", 538, 558], ["o(o1)", 467, 566], ["b", 404, 591], ["2", 405, 601], ["c", 487, 627], ["3", 498, 623],
      ["A", 631, 319], ["1", 701, 302], ["2", 722, 338], ["3", 767, 348], ["4", 794, 342], ["5", 833, 336], ["1", 880, 326], ["A", 940, 368], ["O", 796, 288],
      ["B", 663, 395], ["C", 731, 444], ["D", 811, 459], ["E", 886, 428],
    ];
    return html`<svg class="paper" viewBox="295 177 667 471" role="img" aria-label="Pyramid drawing">
      <path class="thin" d="M354 306.500H465L433 392M465 306L474 368M465 306L489 360M474 368.500H494"></path>
      <path class="thin axis" d="M465.500 306V440M433 392L489 360"></path>
      <path class="grey" d="M398 373.500H465M411.500 452V514M486.500 452V617M532.500 452V553M465.500 440V553"></path>
      <path class="thin" d="M336 452.500H573M433 392.500H505M465 306L523 280M493 368L505 363.500M489 360L547 333.500M505 392L531 380M532 452L581 430"></path>
      <path class="thick" d="M433 392L411 452.500H532L489 360M474 368L485.500 452M411 514L486 490.500 532 553 486 616.500 411 593ZM411 514L465 553 486 490.500M411 593L465 553 486 616.500M465 553.500H532"></path>
      <path class="teal" d="M505 392.500H543M489 360L528 339M527 340Q540 362 539.500 392"></path>
      ${this.tip([527, 340], [532, 350], "#2d8f96")}${this.tip([539.5, 392], [539.5, 380], "#2d8f96")}
      ${this.dim([357.5, 307], [357.5, 452], "65", [352, 379], -90)}
      ${this.dim([402, 307], [402, 373], "30", [396, 340], -90)}
      ${this.dim([473, 303], [501, 366], "30,5", [491, 333], 65)}
      ${this.dim([488, 296], [528, 382], "4198", [513, 337], 65)}
      ${this.dim([512, 285], [578, 431], "7149", [549, 356], 65)}
      ${this.dim([520, 282], [544, 334], "26,1", [537, 307], 65)}
      <text class="dim t" transform="translate(542 363) rotate(75)" y="3">30°</text>
      <path class="thin" d="M411 593L402 619M486 617L477 642"></path>
      ${this.dim([403, 616.5], [478, 640], "35", [442, 623], 17)}
      <path class="thin" d="M702 303.500L795 287 722 346M795 287L768 349.500M795 287L800.500 345M795 287L833 343.500M795 287L878 331M636.500 315.500A161 161 0 0 0 936 362.500"></path>
      <path class="thick" d="M702 303.500L636.500 315.500 669 387.500 732 434.500 809.500 446.500 883.500 420.500 936 362.500 878 331 833 343.500 800.500 345 768 349.500 722 346ZM722 346L669 387.500M768 349.500L732 434.500M800.500 345L809.500 446.500M833 343.500L883.500 420.500"></path>
      <path class="thin" d="M636.500 315.500L630 278M795 287L788 250M636.500 315.500L614 326M669 387.500L646 397"></path>
      ${this.dim([631, 281], [788, 254], "7149", [708, 262], -9)}
      ${this.dim([617, 324], [649, 396], "35", [639, 358], 65)}
      <circle class="dot" cx="636.500" cy="315.500" r="2.500"></circle><circle class="dot" cx="936" cy="362.500" r="2.500"></circle><circle class="dot" cx="795" cy="287" r="2"></circle>
      ${names.map(([t, x, y]) => svg`<text class="name" x=${x} y=${y}>${t}</text>`)}
      <text class="small" x="778" y="407">DEVELOPMENT</text>
      ${notes.map((t, i) => svg`<text class="note" x="321" y=${197 + i * 11}>${t}</text>`)}
    </svg>`;
  }
}

/* ---------- sheet tabs and status bar ---------- */

@customElement("se-status")
class SeStatus extends LitElement {
  @property({ type: Number }) sheets = 17;
  @state() private zoom = 50;
  static styles = [base, css`
    .sheets { display: flex; height: 11px; margin-right: 19px; background: #c0c0c0; border-top: 1px solid #333; border-bottom: 1px solid #333; }
    .sheets > button { width: 39px; background: #fbd3b0; color: #222; font-family: "Liberation Sans", sans-serif; position: relative; line-height: 9px; }
    .sheets > button.ten { width: 44px; }
    .sheets > button.on { background: #fff; font-weight: 700; }
    .sheets > button.add { width: 26px; }
    .sheets .nav { width: 11px; background: #e6e6e6; border-right: 1px solid #999; color: #888; font-size: 6px; }
    .slash { position: absolute; right: -3px; top: 0; z-index: 1; }
    .status { display: flex; align-items: center; justify-content: flex-end; height: 14px; background: #006487; gap: 2px; padding-right: 2px; }
    .status button { width: 12px; height: 12px; }
    .status .ic { width: 10px; height: 10px; }
    .status .end { margin-left: 2px; }
    input { appearance: none; width: 76px; height: 12px; background: linear-gradient(#fff, #fff) center / 100% 1px no-repeat; }
    input::-webkit-slider-thumb { appearance: none; width: 4px; height: 7px; background: #e9e9e9; border: 1px solid #888; }
  `];
  render() {
    const b = (n: string, cls = "") => html`<button class=${cls} aria-label=${n}>${ic(n, 10, 10, 14, 14)}</button>`;
    const slash = html`<svg class="slash" width="6" height="9" viewBox="0 0 6 9" aria-hidden="true"><path d="M1 9L3 5l2 4z" fill="#8fb0b8"></path><path d="M1 9L5 0M3 5l2 4" fill="none" stroke="#333" stroke-width=".8"></path></svg>`;
    return html`
      <div class="sheets">
        ${["|◂", "◂", "▸", "▸|"].map((t) => html`<button class="nav" aria-label="Scroll sheets">${t}</button>`)}
        ${Array.from({ length: this.sheets }, (_, i) => i + 1).map((n) => html`<button class=${classMap({ ten: n > 9, on: n === this.sheets })}>Sheet${n}${slash}</button>`)}
        <button class="add" aria-label="New sheet">${ic("New sheet", 9, 9, 14, 14)}${slash}</button>
      </div>
      <div class="status">
        ${["Fit sheet", "Zoom", "Zoom area", "Fit", "Fit width", "Zoom out"].map((n) => b(n))}
        <input type="range" min="0" max="100" .value=${String(this.zoom)} aria-label="Zoom" @input=${(e: Event) => (this.zoom = +(e.target as HTMLInputElement).value)} />
        ${b("Zoom in")}${["YouTube", "Record", "Upload"].map((n) => b(n, "end"))}
      </div>`;
  }
}

/* ---------- desktop taskbar ---------- */

const chrome = svg`<circle cx="10" cy="10" r="8" fill="#e33b2e"></circle><path d="M10 10L3 6a8 8 0 0 0 6 12z" fill="#31a350"></path><path d="M10 10h8a8 8 0 0 1-9 8z" fill="#fbc116"></path><circle cx="10" cy="10" r="4" fill="#fff"></circle><circle cx="10" cy="10" r="3" fill="#3d7fe8"></circle>`;

const APPS: { name: string; open?: boolean; active?: boolean; art: unknown }[] = [
  { name: "Task view", art: svg`<path d="M7 3h11v10H7z" fill="#e8e8e8"></path><path d="M3 7h10v9H3z" fill="#2b2b2b"></path><path d="M7 7h6v6H7z" fill="#888"></path>` },
  { name: "Chat", art: svg`<path d="M10 3a7.500 7.500 0 1 1-5 13l-3 2 1-4A7.500 7.500 0 0 1 10 3z" fill="#6a67c5"></path><path d="M6 7h6v6H6zM12 9l3-2v6l-3-2z" fill="#fff"></path>` },
  { name: "Edge", art: svg`<circle cx="10" cy="10" r="8" fill="#1c7fd0"></circle><path d="M2 9c1-5 5-7 8-7 5 0 8 3 8 7 0 3-4 4-6 2 1-3-2-5-4-5-3 0-5 2-6 3z" fill="#48c98e"></path><path d="M9 9c-3 3 1 8 7 7-3 3-9 2-10-2-1-3 1-5 3-5z" fill="#115ea3"></path><path d="M10 8q3 0 2 3 2 2 6 0-2 4-6 3t-3-4z" fill="#dfeee9"></path>` },
  { name: "Music", art: svg`<path d="M2 2h16v16H2z" fill="#fff"></path><circle cx="10" cy="10" r="6.500" fill="none" stroke="#c75fc4"></circle><path d="M8 13V7l5-1v6" fill="none" stroke="#e04f6d" stroke-width="1.300"></path><circle cx="7" cy="13" r="1.500" fill="#4a8fe0"></circle><circle cx="12" cy="12" r="1.500" fill="#e04f6d"></circle>` },
  { name: "Chrome", art: chrome },
  { name: "WhatsApp", open: true, art: svg`<path d="M2 18l1-4a8 8 0 1 1 3 3z" fill="#fff" stroke="#2c9a64" stroke-width="1.800"></path><path d="M7 7c0 4 3 7 7 6l-1-3-2 1-2-3 1-1-1-2z" fill="#2c9a64"></path><circle cx="15" cy="5" r="5" fill="#157f82"></circle><text x="15" y="7.500" font-size="7" text-anchor="middle" fill="#fff">1</text>` },
  { name: "Solid Edge", active: true, art: svg`<path d="M2 2h16v16H2z" fill="#2b6bc4"></path><path d="M2 2h13v13H2z" fill="#273b92"></path><text x="10" y="13" font-size="7" font-weight="700" text-anchor="middle" fill="#fff">SE</text>` },
  { name: "SolidWorks", art: svg`<path d="M2 4l11-2 5 3v9H5l-3-3z" fill="#c4242b"></path><text x="10" y="11" font-size="8" font-weight="700" text-anchor="middle" fill="#fff" stroke="#222" stroke-width=".3">SW</text><text x="10" y="18" font-size="6" font-weight="700" text-anchor="middle" fill="#111">2023</text>` },
  { name: "Ansys", art: svg`<path d="M2 2h16v16H2z" fill="#141414"></path><circle cx="8" cy="9" r="2.500" fill="none" stroke="#e5a72c" stroke-width="1.800"></circle><circle cx="13" cy="5" r="1.800" fill="none" stroke="#e5a72c" stroke-width="1.300"></circle><text x="9" y="18" font-size="6" font-weight="700" text-anchor="middle" fill="#fff">A</text>` },
  { name: "Workbench", art: svg`<path d="M2 2h16v16H2z" fill="#141414"></path><circle cx="10" cy="5" r="2" fill="none" stroke="#e5a72c" stroke-width="1.300"></circle><circle cx="7" cy="9" r="2" fill="none" stroke="#e5a72c" stroke-width="1.300"></circle><circle cx="13" cy="9" r="2" fill="none" stroke="#e5a72c" stroke-width="1.300"></circle><text x="10" y="18" font-size="6" font-weight="700" text-anchor="middle" fill="#fff">WB</text>` },
  { name: "Capture", art: svg`<path d="M3 5h3l1-2h6l1 2h2v9H3z" fill="#484f55"></path><circle cx="9" cy="9" r="3" fill="#8c979e"></circle><path d="M9 9h9v6H9z" fill="#3c7fc4"></path><path d="M11 17h5v1h-5z" fill="#555"></path>` },
  { name: "Chrome profile", open: true, art: svg`${chrome}<circle cx="15" cy="5" r="5" fill="#303a3a"></circle><path d="M13 7l3-4 1 3z" fill="#9fc29b"></path>` },
  { name: "Clipchamp", open: true, art: svg`<path d="M3 7h14v11H3z" fill="#a05ef0"></path><path d="M3 5l14-3v4L3 9z" fill="#5d3ccb"></path><path d="M3 13h14v5H3z" fill="#8047dc"></path>` },
  { name: "File Explorer", open: true, art: svg`<path d="M2 3h6l2 2h8v12H2z" fill="#f6bf3a"></path><path d="M2 7h16v10H2z" fill="#fcd667"></path><path d="M4 12h12v5H4z" fill="#2a83b8"></path>` },
  { name: "PowerPoint", open: true, art: svg`<circle cx="11" cy="10" r="7.500" fill="#dd5f3c"></circle><path d="M11 2.500a7.500 7.500 0 0 1 7.500 7.500H11z" fill="#f29a7c"></path><path d="M2 5h9v10H2z" fill="#c13b1e"></path><text x="6.500" y="13" font-size="8" font-weight="700" text-anchor="middle" fill="#fff">P</text>` },
];

@customElement("se-taskbar")
class SeTaskbar extends LitElement {
  static styles = [base, css`
    :host { background: linear-gradient(90deg, #e2dfd4, #e0e0de 18%, #d9dfdc 45%, #dbe0de); font-size: 8px; line-height: 11px; }
    .bar { display: grid; grid-template-columns: 1fr auto 1fr; align-items: center; height: 31px; padding: 0 8px 0 13px; }
    .weather, .tray, .mid { display: flex; align-items: center; }
    .weather { gap: 2px; color: #555; }
    .weather b { font-weight: 400; display: block; color: #222; }
    .mid > button { width: 22px; height: 26px; }
    .search { display: flex; align-items: center; width: 146px; height: 21px; margin-left: 5px; border-radius: 11px; background: #f4f6f5; padding: 0 4px 0 7px; gap: 6px; }
    .search input { flex: 1; min-width: 0; font-size: 9px; outline: 0; }
    .search input::placeholder { color: #666; opacity: 1; }
    .apps { display: grid; grid-auto-flow: column; grid-auto-columns: 1fr; width: 443px; }
    .apps button { flex-direction: column; height: 27px; padding-top: 3px; justify-content: flex-start; gap: 2px; justify-self: center; width: 25px; }
    .apps .active { background: #f0f4f3; border-radius: 3px; }
    .apps i { width: 4px; height: 2px; border-radius: 1px; background: #8a8f8d; }
    .apps .active i { width: 10px; background: #177b8c; }
    .tray { justify-content: flex-end; gap: 8px; color: #222; padding-right: 5px; }
    .tray .two { text-align: right; }
    .tray .lang { text-align: center; margin: 0 5px; }
    .tray .snd { display: flex; gap: 4px; margin-right: 4px; }
    .tray .clock { margin-right: -3px; }
  `];
  render() {
    return html`<div class="bar">
      <div class="weather">
        <svg width="20" height="20" viewBox="0 0 20 20" aria-hidden="true"><path d="M3 13a7 6 0 0 0 12-5q0 4-5 5z" fill="#f29a2e" stroke="#f29a2e"></path><path d="M3 9q-1-4 4-4 4 0 4 4z" fill="#bcd0ef"></path><circle cx="13" cy="6" r="5" fill="#c42b1c"></circle><text x="13" y="9" font-size="7" text-anchor="middle" fill="#fff">1</text></svg>
        <div><b>23°C</b>Mostly clear</div>
      </div>
      <div class="mid">
        <button aria-label="Start"><svg width="16" height="16" viewBox="0 0 16 16" aria-hidden="true"><path d="M0 0h7.500v7.500H0zM8.500 0H16v7.500H8.500z" fill="#27a3e6"></path><path d="M0 8.500h7.500V16H0zM8.500 8.500H16V16H8.500z" fill="#0f7bd3"></path></svg></button>
        <label class="search">
          <svg width="10" height="10" viewBox="0 0 10 10" aria-hidden="true"><circle cx="4.500" cy="4.500" r="3.500" fill="none" stroke="#222" stroke-width="1.300"></circle><path d="M7 7l3 3" stroke="#222" stroke-width="1.300"></path></svg>
          <input type="text" placeholder="Search" aria-label="Search" />
          <svg width="28" height="18" viewBox="0 0 28 18" aria-hidden="true"><circle cx="14" cy="9" r="7.500" fill="#efe1b5" stroke="#c4b98b"></circle><circle cx="14" cy="9" r="3.500" fill="#e8aa2b"></circle><path d="M1 16q5-4 11-1 6-4 15-1l-1 3H4z" fill="#5f6a50"></path></svg>
        </label>
        <div class="apps">${APPS.map((a) => html`<button class=${classMap({ active: !!a.active })} aria-label=${a.name} title=${a.name}><svg width="20" height="20" viewBox="0 0 20 20" aria-hidden="true">${a.art}</svg>${a.open || a.active ? html`<i></i>` : nothing}</button>`)}</div>
      </div>
      <div class="tray">
        <svg width="8" height="6" viewBox="0 0 8 6" aria-hidden="true"><path d="M1 5l3-3 3 3" fill="none" stroke="#222" stroke-width="1.200"></path></svg>
        <svg width="12" height="9" viewBox="0 0 12 9" aria-hidden="true"><path d="M3 8q-2 0-2-2t2-2q1-3 4-3t3 3q1.500 0 1.500 2T9.500 8z" fill="#bbb" stroke="#333"></path></svg>
        <div class="two lang">ENG<br />IN</div>
        <div class="snd">
          <svg width="10" height="10" viewBox="0 0 10 10" aria-hidden="true"><path d="M0.500 4q4.500-4 9 0M2 6q3-3 6 0" fill="none" stroke="#666"></path><circle cx="5" cy="8" r="1.200" fill="#333"></circle></svg>
          <svg width="11" height="10" viewBox="0 0 11 10" aria-hidden="true"><path d="M1 3.500h2L6 1v8L3 6.500H1z" fill="none" stroke="#444"></path><path d="M7.500 3q1.500 2 0 4M9 1.500q2.500 3.500 0 7" fill="none" stroke="#888"></path></svg>
        </div>
        <div class="two clock">00:07<br />22-06-2024</div>
        <svg width="10" height="12" viewBox="0 0 10 12" aria-hidden="true"><path d="M1 9V5q0-4 4-4t4 4v4zM4 10h2v1H4z" fill="#12505f"></path><path d="M0 9h10" stroke="#12505f"></path></svg>
      </div>
    </div>`;
  }
}

/* ---------- page ---------- */

@customElement("app-root")
class AppRoot extends LitElement {
  static styles = [base, css`
    :host { display: flex; flex-direction: column; min-height: 100vh; background: #fff; }
    .middle { display: grid; grid-template-columns: minmax(0, 1fr); flex: 1; }
    .space { display: grid; grid-template-columns: 209px minmax(0, 669px); column-gap: 60px; align-items: start; padding: 10px 19px 0 25px; }
    se-panel { margin-top: 5px; }
    .top { position: relative; }
    .strip { position: absolute; right: 0; top: 33px; width: 18px; height: 536px; background: #fafafa; display: flex; flex-direction: column; align-items: center; padding: 5px 0 0 3px; gap: 9px; }
    .strip .grp { display: flex; flex-direction: column; align-items: center; gap: 1px; margin-bottom: 2px; }
    .strip .v { writing-mode: vertical-rl; font-size: 8px; }
    .strip .ic { width: 13px; height: 13px; }
    .strip button { flex-direction: column; }
  `];
  render() {
    return html`
      <se-header></se-header>
      <se-ribbon></se-ribbon>
      <div class="top">
        <se-bars></se-bars>
        <aside class="strip">
          <button aria-label="Library">${ic("Library")}</button>
          <button class="grp">${ic("Groups")}<span class="v">Groups</span></button>
          <button aria-label="Views">${ic("Camera")}</button>
          <button aria-label="Command finder">${ic("Help page")}</button>
        </aside>
      </div>
      <main class="middle"><div class="space"><se-panel></se-panel><se-drawing></se-drawing></div></main>
      <se-status></se-status>
      <se-taskbar></se-taskbar>`;
  }
}
